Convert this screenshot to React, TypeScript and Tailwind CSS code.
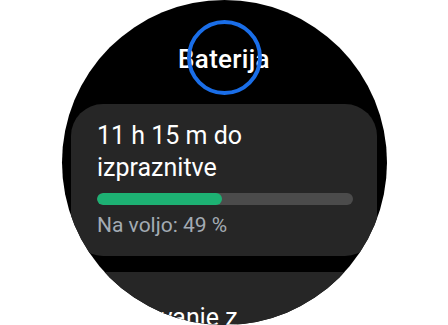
import React from "react";

export default function App() {
  return (
    <div className="w-[448px] h-[325px] bg-white flex justify-center overflow-hidden" style={{ fontFamily: "Roboto, 'Noto Sans', sans-serif" }}>
      <div className="relative w-[325px] h-[325px] rounded-full bg-black overflow-hidden flex flex-col items-center">
        <div className="mt-[44px] h-[30px] text-[26px] leading-[30px] font-medium text-white tracking-[0.3px]">Baterija</div>
        <div className="absolute left-[125px] top-[20px] w-[75px] h-[75px] rounded-full border-[4px] border-[#1a6ee8]" />
        <div className="mt-[30px] w-[306px] h-[152px] rounded-[32px] bg-[#262626] pl-[26px] pr-[20px] pt-[16px] shrink-0">
          <div className="text-[25px] leading-[32px] text-white">11 h 15 m do<br />izpraznitve</div>
          <div className="mt-[9px] w-[256px] h-[12px] rounded-full bg-[#4b4b4b] overflow-hidden">
            <div className="h-full rounded-full bg-[#1db173]" style={{ width: "49%" }} />
          </div>
          <div className="mt-[7px] text-[21px] leading-[26px] text-[#a3abb3]">Na voljo: 49 %</div>
        </div>
        <div className="mt-[16px] w-[306px] h-[152px] rounded-[32px] bg-[#262626] pl-[26px] pt-[30px] shrink-0">
          <div className="text-[25px] leading-[32px] text-white">Varčevanje z<br />energijo</div>
        </div>
      </div>
    </div>
  );
}
